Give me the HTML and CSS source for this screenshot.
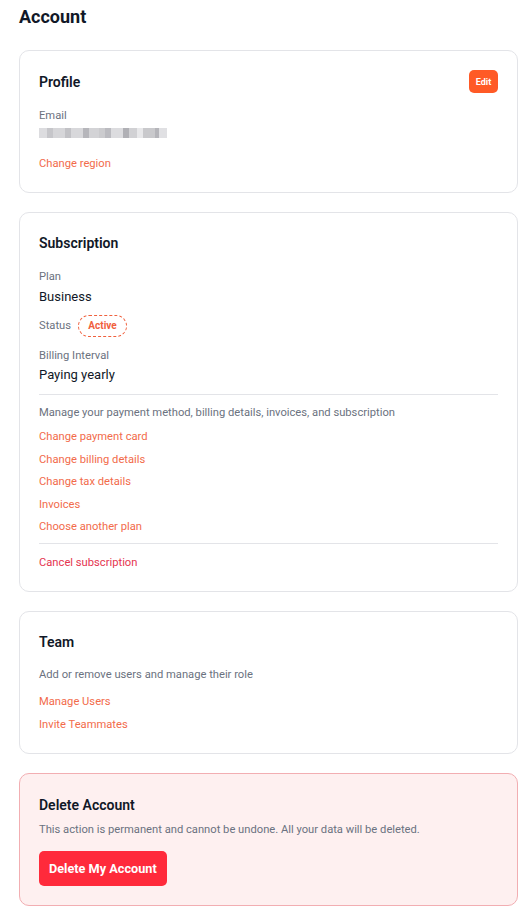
FILE: index.html
```html
<!DOCTYPE html>
<html lang="en">
<head>
<meta charset="utf-8">
<title>Account</title>
<link rel="stylesheet" href="styles.css">
</head>
<body>
<main class="page">
  <h1 class="page-title">Account</h1>

  <section class="card">
    <div class="card-head">
      <h2 class="card-title">Profile</h2>
      <button class="btn-edit">Edit</button>
    </div>
    <div class="label label-email">Email</div>
    <div class="email-blur" aria-label="hidden email"></div>
    <a class="link link-region" href="#">Change region</a>
  </section>

  <section class="card">
    <h2 class="card-title">Subscription</h2>
    <div class="label label-plan">Plan</div>
    <div class="value">Business</div>
    <div class="status-row">
      <span class="label">Status</span>
      <span class="badge">Active</span>
    </div>
    <div class="label label-interval">Billing Interval</div>
    <div class="value value-tight">Paying yearly</div>
    <hr class="divider divider-top">
    <p class="desc desc-sub">Manage your payment method, billing details, invoices, and subscription</p>
    <div class="links links-sub">
      <a class="link" href="#">Change payment card</a>
      <a class="link" href="#">Change billing details</a>
      <a class="link" href="#">Change tax details</a>
      <a class="link" href="#">Invoices</a>
      <a class="link" href="#">Choose another plan</a>
    </div>
    <hr class="divider divider-bottom">
    <a class="link link-danger" href="#">Cancel subscription</a>
  </section>

  <section class="card">
    <h2 class="card-title">Team</h2>
    <p class="desc desc-team">Add or remove users and manage their role</p>
    <div class="links links-team">
      <a class="link" href="#">Manage Users</a>
      <a class="link" href="#">Invite Teammates</a>
    </div>
  </section>

  <section class="card card-danger">
    <h2 class="card-title">Delete Account</h2>
    <p class="desc desc-danger">This action is permanent and cannot be undone. All your data will be deleted.</p>
    <button class="btn-delete">Delete My Account</button>
  </section>
</main>
</body>
</html>
```

FILE: styles.css
```css
* { box-sizing: border-box; }
html, body { margin: 0; padding: 0; background: #ffffff; }
body {
  font-family: Roboto, "Liberation Sans", Arial, sans-serif;
  color: #111827;
}
.page {
  padding: 5px 13px 18px 19px;
  display: flex;
  flex-direction: column;
}
.page-title {
  margin: 0 0 21px 0;
  font-size: 18px;
  font-weight: 700;
  line-height: 24px;
  color: #111827;
}
.card {
  border: 1px solid #e3e4e8;
  border-radius: 10px;
  padding: 19px 19px 20px 19px;
  margin-bottom: 19px;
  display: flex;
  flex-direction: column;
  align-items: flex-start;
  background: #fff;
}
.card-head {
  display: flex;
  justify-content: space-between;
  align-items: center;
  width: 100%;
  height: 23px;
}
.card-title {
  margin: 0;
  font-size: 14px;
  font-weight: 600;
  line-height: 22px;
  color: #111827;
}
.btn-edit {
  border: none;
  background: #ff5a26;
  color: #fff;
  font-family: inherit;
  font-size: 9px;
  font-weight: 700;
  border-radius: 5px;
  width: 29px;
  height: 23px;
  padding: 0;
}
.label {
  font-size: 11.2px;
  line-height: 16px;
  color: #6b7280;
}
.label-email { margin-top: 15px; }
.label-plan { margin-top: 15px; }
.label-interval { margin-top: 11px; }
.value {
  font-size: 13px;
  line-height: 18px;
  color: #111827;
  margin-top: 3px;
}
.value-tight { margin-top: 2px; }
.email-blur {
  margin-top: 4px;
  width: 128px;
  height: 10px;
  background:
    linear-gradient(90deg,
      #dcdcdf 0 8px, #c6c6ca 8px 14px, #d6d6d9 14px 26px, #c2c2c6 26px 32px,
      #d8d8db 32px 44px, #b6b6bb 44px 50px, #d3d3d6 50px 60px, #cbcbce 60px 66px,
      #bbbbc0 66px 72px, #dcdcdf 72px 84px, #b0b0b5 84px 90px, #d1d1d4 90px 98px,
      #e8e8ea 98px 104px, #c9c9cc 104px 116px, #b5b5ba 116px 120px, #e0e0e3 120px 128px);
  filter: blur(0.6px);
}
.link {
  font-size: 11.2px;
  line-height: 16px;
  color: #f26b4b;
  text-decoration: none;
}
.link-region { margin-top: 18px; }
.status-row {
  margin-top: 9px;
  display: flex;
  align-items: center;
  gap: 7px;
  height: 22px;
}
.badge {
  font-size: 10px;
  font-weight: 700;
  color: #f0603d;
  border: 1px dashed #f0603d;
  border-radius: 11px;
  padding: 0 9px;
  width: 49px;
  text-align: center;
  height: 22px;
  line-height: 20px;
}
.divider {
  width: 100%;
  border: none;
  border-top: 1px solid #e3e4e8;
  margin: 0;
}
.divider-top { margin-top: 10px; }
.desc {
  margin: 0;
  font-size: 11.2px;
  line-height: 16px;
  color: #6b7280;
}
.desc-sub { margin-top: 10px; }
.links {
  display: flex;
  flex-direction: column;
}
.links-sub { gap: 6.5px; margin-top: 8px; }
.divider-bottom { margin-top: 8px; }
.link-danger { color: #e5344f; margin-top: 11px; }
.desc-team { margin-top: 14px; }
.links-team { gap: 7px; margin-top: 11px; }
.card-danger {
  background: #fef0f0;
  border-color: #f2aeb2;
  padding-top: 20px;
  padding-bottom: 19px;
}
.desc-danger { margin-top: 6px; }
.btn-delete {
  margin-top: 13px;
  border: none;
  background: #ff2a3b;
  color: #fff;
  font-family: inherit;
  font-size: 12.7px;
  font-weight: 700;
  border-radius: 5px;
  height: 35px;
  padding: 0 10px;
}
```
